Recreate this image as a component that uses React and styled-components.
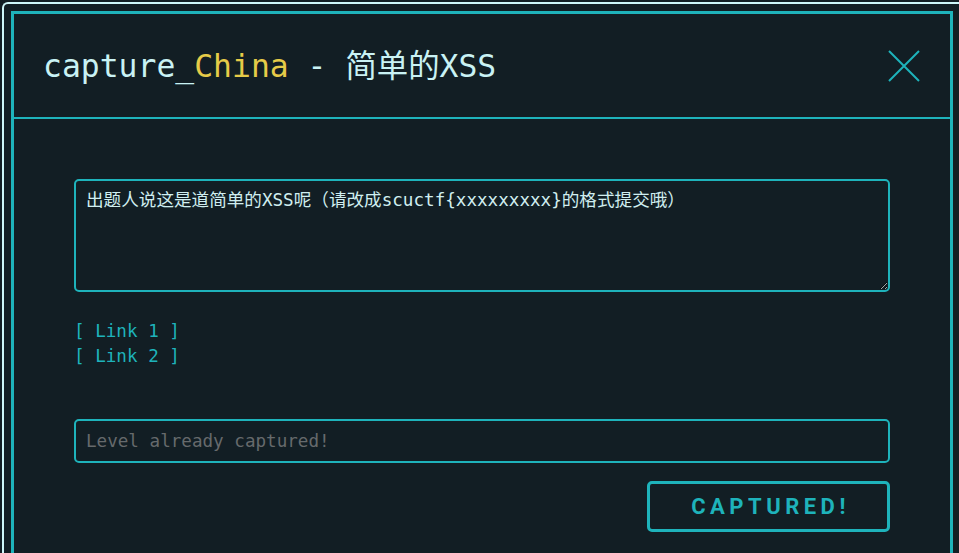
import React from "react";
import styled, { createGlobalStyle } from "styled-components";

const Global = createGlobalStyle`
  html, body { margin: 0; padding: 0; background: #121e24; overflow: hidden; }
  body { font-family: "DejaVu Sans Mono", "Noto Sans CJK SC", monospace; }
`;

const Frame = styled.div`
  margin: 2px 0 0 2px;
  height: 560px;
  border-top: 2px solid #cdf6f9;
  border-left: 2px solid #cdf6f9;
  border-top-left-radius: 6px;
  padding: 7px 6px 0 7px;
  background: #121e24;
`;

const Panel = styled.div`
  border: 3px solid #1eb3bb;
  border-bottom: none;
  height: 600px;
  display: flex;
  flex-direction: column;
`;

const Header = styled.div`
  box-sizing: border-box;
  height: 105px;
  border-bottom: 2px solid #1eb3bb;
  display: flex;
  align-items: center;
  justify-content: space-between;
  padding: 0 30px 5px 29px;
`;

const Title = styled.h1`
  margin: 0;
  font-family: "DejaVu Sans Mono", "Noto Sans CJK SC", monospace;
  font-weight: normal;
  font-size: 31.4px;
  color: #c9f2f4;
`;

const Accent = styled.span`
  color: #e6cb48;
`;

const Close = styled.button`
  background: none;
  border: none;
  padding: 0;
  margin-top: 5px;
  width: 32px;
  height: 32px;
  cursor: pointer;
  display: flex;
`;

const Body = styled.div`
  padding: 60px 60px 0 60px;
  display: flex;
  flex-direction: column;
`;

const Area = styled.textarea`
  box-sizing: border-box;
  height: 113px;
  width: 100%;
  background: #121e24;
  border: 2px solid #1eb3bb;
  border-radius: 5px;
  padding: 9px 10px;
  color: #d0eef0;
  font-family: "DejaVu Sans Mono", "Noto Sans CJK SC", monospace;
  font-size: 17.6px;
  line-height: 21px;
  outline: none;
`;

const Links = styled.div`
  margin-top: 27px;
  display: flex;
  flex-direction: column;
`;

const LinkItem = styled.a`
  color: #1eb3bb;
  text-decoration: none;
  font-size: 17.6px;
  line-height: 25px;
  white-space: pre;
`;

const Input = styled.input`
  box-sizing: border-box;
  margin-top: 50px;
  height: 44px;
  width: 100%;
  background: #121e24;
  border: 2px solid #1eb3bb;
  border-radius: 5px;
  padding: 0 10px;
  font-family: "DejaVu Sans Mono", monospace;
  font-size: 17.6px;
  color: #c6e9eb;
  outline: none;
  &::placeholder { color: #666a6c; }
`;

const Actions = styled.div`
  margin-top: 18px;
  display: flex;
  justify-content: flex-end;
`;

const Button = styled.button`
  box-sizing: border-box;
  width: 243px;
  height: 51px;
  background: transparent;
  border: 3px solid #1eb3bb;
  border-radius: 5px;
  color: #1eb3bb;
  font-family: "Roboto", "Liberation Sans", sans-serif;
  font-weight: 700;
  font-size: 22px;
  letter-spacing: 4.5px;
  padding: 0 0 0 4px;
`;

export default function App() {
  return (
    <>
      <Global />
      <Frame>
        <Panel>
          <Header>
            <Title>
              capture_<Accent>China</Accent> - 简单的XSS
            </Title>
            <Close aria-label="close">
              <svg width="32" height="32" viewBox="0 0 32 32">
                <path d="M1 1 L31 31 M31 1 L1 31" stroke="#1eb3bb" strokeWidth="2" fill="none" />
              </svg>
            </Close>
          </Header>
          <Body>
            <Area
              readOnly
              defaultValue="出题人说这是道简单的XSS呢（请改成scuctf{xxxxxxxxx}的格式提交哦）"
            />
            <Links>
              <LinkItem href="#">[ Link 1 ]</LinkItem>
              <LinkItem href="#">[ Link 2 ]</LinkItem>
            </Links>
            <Input placeholder="Level already captured!" />
            <Actions>
              <Button>CAPTURED!</Button>
            </Actions>
          </Body>
        </Panel>
      </Frame>
    </>
  );
}
